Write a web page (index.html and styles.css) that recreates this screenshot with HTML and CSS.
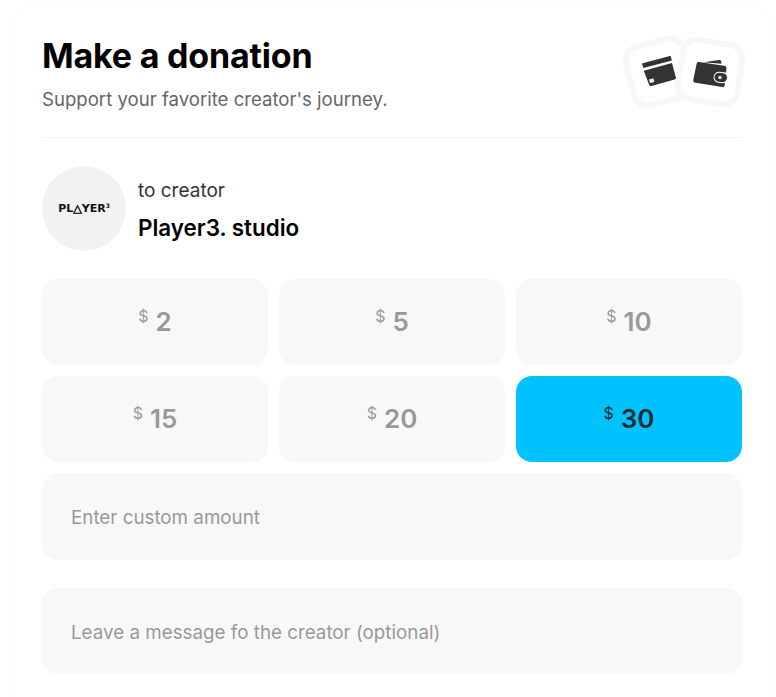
FILE: index.html
```html
<!DOCTYPE html>
<html lang="en">
<head>
<meta charset="utf-8">
<title>Make a donation</title>
<link rel="stylesheet" href="styles.css">
</head>
<body>
<main class="card">
  <header class="head">
    <div class="head-text">
      <h1 class="title">Make a donation</h1>
      <p class="subtitle">Support your favorite creator's journey.</p>
    </div>
    <div class="pay-icons">
      <div class="tile tile-card"></div>
      <div class="tile tile-wallet"></div>
      <svg class="glyphs" viewBox="620 33 124 80" width="124" height="80">
        <path class="ink" d="M642.500 63.200 669 56.200c1.200-.3 1.800.2 2 1l.9 3.200-28.500 7.700-1.200-3.600c-.2-.6 0-1.100.3-1.300z"/>
        <path class="ink" d="M643.800 70.700 672 63l3.800 14.300c.3 1.200-.1 2-1.200 2.300L651.500 86c-1.200.3-2-.1-2.400-1.200z"/>
        <path class="hole" d="M649 79.400l4.300-1.200 1.100 3.700-4.300 1.200z"/>
        <path class="ink" d="M703.500 62.300 719 60c1.200-.2 2 .3 2.200 1.400l.3 2.400z"/>
        <path class="ink" d="M696.700 63.500c.3-1.100 1.100-1.500 2.200-1.400l25.300 3.600c1.500.2 2.400 1.200 2.300 2.600l-.4 4.200h-4.500c-3.200 0-5.400 2-5.400 4.800s2.200 4.800 5.400 4.800h3.300l-.2 3.200c-.1 1.300-.8 2-2.200 1.800l-27-4.400c-1.800-.3-2.500-1.300-2.200-3z"/>
        <rect class="ring" x="714" y="72.500" width="13.500" height="10" rx="5" transform="rotate(6 721 77.500)"/>
        <circle class="hole" cx="720" cy="77.500" r="1.700"/>
      </svg>
    </div>
  </header>

  <section class="creator">
    <div class="avatar"><span class="logo">PL<span class="logo-a">△</span>YER<sup class="logo-sup">3</sup></span></div>
    <div class="creator-text">
      <p class="creator-label">to creator</p>
      <p class="creator-name">Player3. studio</p>
    </div>
  </section>

  <section class="amounts">
    <button class="amount" type="button"><span class="cur">$</span><span class="val">2</span></button>
    <button class="amount" type="button"><span class="cur">$</span><span class="val">5</span></button>
    <button class="amount" type="button"><span class="cur">$</span><span class="val">10</span></button>
    <button class="amount" type="button"><span class="cur">$</span><span class="val">15</span></button>
    <button class="amount" type="button"><span class="cur">$</span><span class="val">20</span></button>
    <button class="amount amount-active" type="button"><span class="cur">$</span><span class="val">30</span></button>
  </section>

  <div class="field field-custom">Enter custom amount</div>
  <div class="field field-message">Leave a message fo the creator (optional)</div>
</main>
</body>
</html>
```
FILE: styles.css
```css
* { box-sizing: border-box; }
html, body { height: 100%; }
body {
  margin: 0;
  background: #fff;
  font-family: Inter, "Liberation Sans", sans-serif;
  overflow: hidden;
}
.card {
  margin: 6px 4px 0 12px;
  height: 720px;
  padding: 26px 29px 0;
  border: 1px solid #fcfcfc;
  border-radius: 20px;
}
.head {
  display: flex;
  justify-content: space-between;
  height: 105px;
  border-bottom: 1px solid #f2f2f2;
}
.title {
  margin: 0;
  font-size: 34px;
  line-height: 46px;
  font-weight: 700;
  color: #000;
  letter-spacing: -0.2px;
}
.subtitle {
  margin: 8px 0 0;
  font-size: 18.600px;
  line-height: 24px;
  color: #666;
}
.pay-icons {
  position: relative;
  width: 124px;
  height: 80px;
  flex: none;
  margin-right: -2px;
}
.tile {
  position: absolute;
  width: 66px;
  height: 66px;
  background: #fff;
  border: 6px solid #f7f7f7;
  border-radius: 17px;
}
.tile-card { left: 6px; top: 6px; transform: rotate(-15deg); }
.tile-wallet { left: 57px; top: 6px; transform: rotate(9deg); }
.glyphs { position: absolute; left: 0; top: 0; display: block; }
.ink { fill: #333; }
.hole { fill: #f2f2f2; }
.ring { fill: #333; stroke: #fff; stroke-width: 1; }
.creator {
  display: flex;
  align-items: center;
  gap: 12px;
  margin-top: 28px;
}
.avatar {
  width: 84px;
  height: 85px;
  border-radius: 50%;
  background: #f2f2f2;
  display: flex;
  align-items: center;
  justify-content: center;
  flex: none;
}
.logo {
  font-family: "DejaVu Sans", sans-serif;
  font-size: 11px;
  font-weight: 700;
  color: #111;
  line-height: 14px;
  white-space: nowrap;
}
.logo-a { font-size: 11px; -webkit-text-stroke: 0.5px #111; }
.logo-sup { font-size: 6px; line-height: 0; vertical-align: 4px; }
.creator-text { padding-top: 2px; }
.creator-label {
  margin: 0;
  font-size: 19px;
  line-height: 24px;
  color: #333;
}
.creator-name {
  margin: 12px 0 0;
  font-size: 22.400px;
  line-height: 26px;
  font-weight: 600;
  color: #000;
}
.amounts {
  display: grid;
  grid-template-columns: repeat(3, 226px);
  grid-auto-rows: 86px;
  gap: 11px;
  margin-top: 28px;
}
.amount {
  border: 0;
  border-radius: 16px;
  background: #f8f8f8;
  color: #999;
  font-family: inherit;
  display: flex;
  align-items: center;
  justify-content: center;
  gap: 7px;
  padding: 0;
}
.amount-active {
  background: #00c2ff;
  color: #1a2a33;
}
.cur {
  font-size: 16px;
  line-height: 20px;
  position: relative;
  top: -6px;
}
.val {
  font-size: 26px;
  line-height: 32px;
  font-weight: 600;
}
.field {
  height: 87px;
  border-radius: 16px;
  background: #f8f8f8;
  color: #999;
  font-size: 18.800px;
  padding: 2px 29px 0;
  display: flex;
  align-items: center;
}
.field-custom { margin-top: 11px; }
.field-message { margin-top: 28px; height: 86px; }
```
